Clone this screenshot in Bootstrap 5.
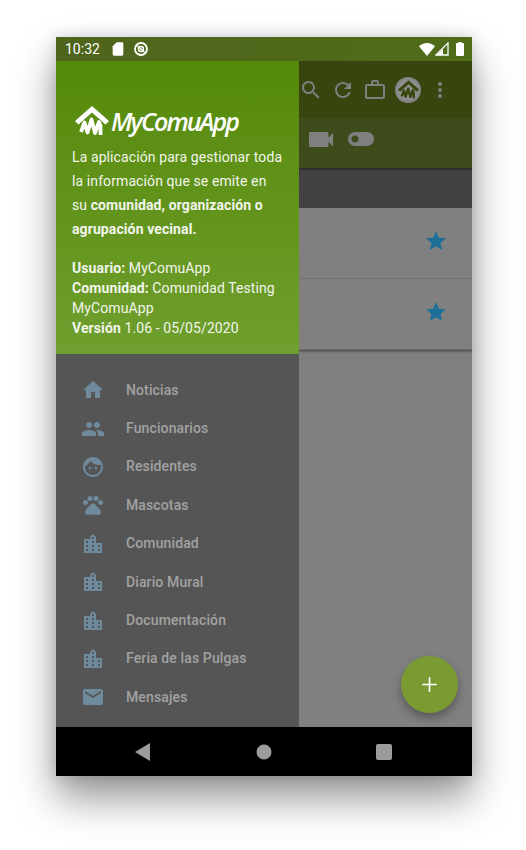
<!DOCTYPE html>
<html lang="es">
<head>
  <meta charset="UTF-8">
  <title>MyComuApp</title>
  <link rel="stylesheet" href="https://cdn.jsdelivr.net/npm/bootstrap@5.3.0/dist/css/bootstrap.min.css">
  <style>
    html, body { height: 850px; overflow: hidden; background: #fff; }
    body { font-family: Roboto, "Liberation Sans", sans-serif; padding: 37px 54px 0 56px; }
    .phone { width: 416px; height: 739px; box-shadow: 0 22px 38px rgba(0,0,0,.42), 0 0 14px rgba(0,0,0,.14); }
    .status-bar { height: 24px; flex: none; background: linear-gradient(90deg, #50641c, #4f6c19); color: #fff; font-size: 14px; padding: 0 8px 0 9px; }
    .status-bar svg { fill: #fff; }
    .sd-icon { margin-left: 10px; }
    .saver-icon { margin-left: 7px; }
    .battery-icon { margin-left: 7px; }
    .screen { height: 666px; min-height: 0; }
    .drawer { width: 243px; flex: none; z-index: 1; }
    .drawer-head { height: 293px; flex: none; padding: 44px 16px 0 16px; color: #f2f5ec; font-size: 14px; background: linear-gradient(180deg, #558909, #6f9f2e); }
    .logo-row { height: 32px; margin-left: 3px; margin-bottom: 8px; }
    .logo-text { font-family: "Open Sans", sans-serif; font-style: italic; font-weight: 600; font-size: 25px; letter-spacing: -1.9px; color: #fff; line-height: 32px; margin-left: 2px; }
    .intro { line-height: 24px; margin-bottom: 17px; letter-spacing: .1px; }
    .intro b, .info b { font-weight: 700; }
    .info { line-height: 20px; letter-spacing: .1px; }
    .side-menu { background: #555; padding-top: 17px; }
    .menu-row { height: 38.4px; padding-left: 25px; color: #a2a2a2; font-size: 14px; font-weight: 500; letter-spacing: .12px; }
    .menu-row svg { width: 24px; height: 24px; fill: #6f8a9c; margin-right: 21px; flex: none; }
    .app-pane { background: #808080; }
    .app-bar { height: 57px; flex: none; background: #37450f; }
    .app-bar svg { fill: #7f7f7f; }
    .profile-dot { width: 26px; height: 26px; background: radial-gradient(circle, #8f8f8f 50%, #6e6e6e 100%); }
    .profile-dot svg { fill: #37450f; color: #37450f; }
    .more-icon { margin-left: 7px; }
    .tab-strip { height: 50px; flex: none; background: #3e4c1c; padding: 0 0 8px 10px; }
    .toggle-icon { margin-left: 15px; }
    .dark-band { height: 40px; flex: none; background: #424242; border-top: 2px solid #2f2f2f; }
    .fav-row { height: 71px; flex: none; border-bottom: 1px solid #717171; padding: 0 24px 4px 0; }
    .fav-row svg { width: 24px; height: 24px; fill: #1e6f97; }
    .fav-end { height: 1px; flex: none; background: #555; box-shadow: 0 1px 2px rgba(0,0,0,.4); }
    .fab-add { position: absolute; right: 14px; bottom: 14px; width: 57px; height: 57px; background: #7a9a32; box-shadow: 0 5px 10px rgba(0,0,0,.32); }
    .fab-add svg { width: 25px; height: 25px; fill: #fff; }
    .nav-bar { height: 49px; flex: none; background: #000; padding: 0 80px 0 78px; }
    .nav-bar svg { fill: #9c9c9c; }
    .home-key { margin-left: 2px; }
  </style>
</head>
<body>

<!-- iconos -->
<svg width="0" height="0" class="position-absolute">
  <symbol id="i-home" viewBox="0 0 24 24"><path d="M10 20v-6h4v6h5v-8h3L12 3 2 12h3v8z"/></symbol>
  <symbol id="i-people" viewBox="0 0 24 24"><path d="M16 11c1.66 0 2.99-1.34 2.99-3S17.66 5 16 5c-1.66 0-3 1.34-3 3s1.34 3 3 3zm-8 0c1.66 0 2.99-1.34 2.99-3S9.66 5 8 5C6.34 5 5 6.34 5 8s1.34 3 3 3zm0 2c-2.33 0-7 1.17-7 3.5V19h14v-2.5c0-2.33-4.67-3.5-7-3.5zm8 0c-.29 0-.62.02-.97.05 1.16.84 1.97 1.97 1.97 3.45V19h6v-2.5c0-2.33-4.67-3.5-7-3.5z"/></symbol>
  <symbol id="i-face" viewBox="0 0 24 24"><path d="M9 11.75c-.69 0-1.25.56-1.25 1.25s.56 1.25 1.25 1.25 1.25-.56 1.25-1.25-.56-1.25-1.25-1.25zm6 0c-.69 0-1.25.56-1.25 1.25s.56 1.25 1.25 1.25 1.25-.56 1.25-1.25-.56-1.25-1.25-1.25zM12 2C6.48 2 2 6.48 2 12s4.48 10 10 10 10-4.48 10-10S17.52 2 12 2zm0 18c-4.41 0-8-3.59-8-8 0-.29.02-.58.05-.86 2.36-1.05 4.23-2.98 5.21-5.37C11.07 8.33 14.05 10 17.42 10c.78 0 1.53-.09 2.25-.26.21.71.33 1.47.33 2.26 0 4.41-3.59 8-8 8z"/></symbol>
  <symbol id="i-pets" viewBox="0 0 24 24"><circle cx="4.5" cy="9.5" r="2.5"/><circle cx="9" cy="5.5" r="2.5"/><circle cx="15" cy="5.5" r="2.5"/><circle cx="19.5" cy="9.5" r="2.5"/><path d="M17.34 14.86c-.87-1.02-1.6-1.89-2.48-2.91-.46-.54-1.05-1.08-1.75-1.32-.11-.04-.22-.07-.33-.09-.25-.04-.52-.04-.78-.04s-.53 0-.79.05c-.11.02-.22.05-.33.09-.7.24-1.28.78-1.75 1.32-.87 1.02-1.6 1.89-2.48 2.91-1.31 1.31-2.92 2.76-2.62 4.79.29 1.02 1.02 2.03 2.33 2.32.73.15 3.06-.44 5.54-.44h.18c2.48 0 4.81.58 5.54.44 1.31-.29 2.04-1.31 2.33-2.32.31-2.04-1.3-3.49-2.61-4.8z"/></symbol>
  <symbol id="i-city" viewBox="0 0 24 24"><path d="M15 11V5l-3-3-3 3v2H3v14h18V11h-6zm-8 8H5v-2h2v2zm0-4H5v-2h2v2zm0-4H5V9h2v2zm6 8h-2v-2h2v2zm0-4h-2v-2h2v2zm0-4h-2V9h2v2zm0-4h-2V5h2v2zm6 12h-2v-2h2v2zm0-4h-2v-2h2v2z"/></symbol>
  <symbol id="i-mail" viewBox="0 0 24 24"><path d="M20 4H4c-1.1 0-1.99.9-1.99 2L2 18c0 1.1.9 2 2 2h16c1.1 0 2-.9 2-2V6c0-1.1-.9-2-2-2zm0 4l-8 5-8-5V6l8 5 8-5v2z"/></symbol>
  <symbol id="i-star" viewBox="0 0 24 24"><path d="M12 17.27L18.18 21l-1.64-7.03L22 9.24l-7.19-.61L12 2 9.19 8.63 2 9.24l5.46 4.73L5.82 21z"/></symbol>
  <!-- techo + M del logo -->
  <symbol id="i-mark" viewBox="0 0 34 30">
    <path d="M17 0L34 15l-3.500 3.500L17 6.500 3.500 18.500 0 15z"/>
    <path d="M6 26l3.500-9.500 3 10 4-13 3.500 13.500 4-11 1.500 3.500V29" fill="none" stroke="currentColor" stroke-width="3.800" stroke-linejoin="round"/>
  </symbol>
</svg>

<div class="phone d-flex flex-column">

  <div class="status-bar d-flex align-items-center">
    <span>10:32</span>
    <svg class="sd-icon" width="16" height="16" viewBox="0 0 24 24"><path d="M18 2h-8L4 8v12c0 1.1.9 2 2 2h12c1.1 0 2-.9 2-2V4c0-1.1-.9-2-2-2z"/></svg>
    <svg class="saver-icon" width="16" height="16" viewBox="0 0 16 16"><circle cx="8" cy="8" r="6" fill="none" stroke="#fff" stroke-width="1.800"/><circle cx="8" cy="8" r="2.500" fill="none" stroke="#fff" stroke-width="1.500"/><path d="M4.500 5l7 6" stroke="#fff" stroke-width="1.400"/></svg>
    <svg class="ms-auto" width="16" height="13" viewBox="0 0 16 13"><path d="M8 13L0 3.200C2 1.400 4.800 0 8 0s6 1.400 8 3.200z"/></svg>
    <svg width="14" height="14" viewBox="0 0 14 14"><path d="M13 1v12H1z" fill="none" stroke="#fff" stroke-width="1.300"/><path d="M8 7v6H2z"/></svg>
    <svg class="battery-icon" width="8" height="14" viewBox="0 0 8 14"><path d="M2.500 0h3v1H7a1 1 0 0 1 1 1v11a1 1 0 0 1-1 1H1a1 1 0 0 1-1-1V2a1 1 0 0 1 1-1h1.500z"/></svg>
  </div>

  <div class="screen d-flex position-relative">

    <!-- menu lateral -->
    <div class="drawer d-flex flex-column">
      <div class="drawer-head">
        <div class="logo-row d-flex align-items-center">
          <svg width="34" height="30" fill="#fff" color="#fff"><use href="#i-mark"/></svg>
          <span class="logo-text">MyComuApp</span>
        </div>
        <p class="intro">La aplicación para gestionar toda<br>la información que se emite en<br>su <b>comunidad, organización o</b><br><b>agrupación vecinal.</b></p>
        <div class="info">
          <b>Usuario:</b> MyComuApp<br>
          <b>Comunidad:</b> Comunidad Testing<br>
          MyComuApp<br>
          <b>Versión</b> 1.06 - 05/05/2020
        </div>
      </div>
      <div class="side-menu flex-grow-1">
        <div class="menu-row d-flex align-items-center"><svg><use href="#i-home"/></svg>Noticias</div>
        <div class="menu-row d-flex align-items-center"><svg><use href="#i-people"/></svg>Funcionarios</div>
        <div class="menu-row d-flex align-items-center"><svg><use href="#i-face"/></svg>Residentes</div>
        <div class="menu-row d-flex align-items-center"><svg><use href="#i-pets"/></svg>Mascotas</div>
        <div class="menu-row d-flex align-items-center"><svg><use href="#i-city"/></svg>Comunidad</div>
        <div class="menu-row d-flex align-items-center"><svg><use href="#i-city"/></svg>Diario Mural</div>
        <div class="menu-row d-flex align-items-center"><svg><use href="#i-city"/></svg>Documentación</div>
        <div class="menu-row d-flex align-items-center"><svg><use href="#i-city"/></svg>Feria de las Pulgas</div>
        <div class="menu-row d-flex align-items-center"><svg><use href="#i-mail"/></svg>Mensajes</div>
      </div>
    </div>

    <!-- pantalla de fondo -->
    <div class="app-pane flex-grow-1 d-flex flex-column">
      <div class="app-bar d-flex align-items-center">
        <svg width="24" height="24" viewBox="0 0 24 24"><path d="M15.500 14h-.79l-.28-.27C15.410 12.590 16 11.110 16 9.500 16 5.910 13.090 3 9.500 3S3 5.910 3 9.500 5.910 16 9.500 16c1.610 0 3.090-.59 4.230-1.570l.27.28v.79l5 4.990L20.490 19l-4.990-5zm-6 0C7.010 14 5 11.990 5 9.500S7.010 5 9.500 5 14 7.010 14 9.500 11.990 14 9.500 14z"/></svg>
        <svg class="ms-2" width="24" height="24" viewBox="0 0 24 24"><path d="M17.650 6.350C16.200 4.900 14.210 4 12 4c-4.420 0-7.990 3.580-7.990 8s3.570 8 7.990 8c3.730 0 6.840-2.550 7.730-6h-2.080c-.82 2.330-3.040 4-5.650 4-3.310 0-6-2.690-6-6s2.690-6 6-6c1.660 0 3.140.69 4.220 1.780L13 11h7V4l-2.350 2.350z"/></svg>
        <svg class="ms-2" width="24" height="24" viewBox="0 0 24 24"><path d="M14 6V4h-4v2h4zM4 8v11h16V8H4zm16-2c1.110 0 2 .89 2 2v11c0 1.110-.89 2-2 2H4c-1.110 0-2-.89-2-2l.01-11c0-1.110.88-2 1.990-2h4V4c0-1.110.89-2 2-2h4c1.110 0 2 .89 2 2v2h4z"/></svg>
        <div class="ms-2 rounded-circle d-flex align-items-center justify-content-center profile-dot">
          <svg width="21" height="19"><use href="#i-mark"/></svg>
        </div>
        <svg class="more-icon" width="24" height="24" viewBox="0 0 24 24"><path d="M12 8c1.100 0 2-.9 2-2s-.9-2-2-2-2 .9-2 2 .9 2 2 2zm0 2c-1.100 0-2 .9-2 2s.9 2 2 2 2-.9 2-2-.9-2-2-2zm0 6c-1.100 0-2 .9-2 2s.9 2 2 2 2-.9 2-2-.9-2-2-2z"/></svg>
      </div>
      <div class="tab-strip d-flex align-items-center">
        <svg width="24" height="15" fill="#7f7f7f" viewBox="0 6 21 12" preserveAspectRatio="none"><path d="M17 10.500V7c0-.55-.45-1-1-1H1c-.55 0-1 .45-1 1v10c0 .55.45 1 1 1h15c.55 0 1-.45 1-1v-3.500l4 4v-11l-4 4z"/></svg>
        <svg class="toggle-icon" width="26" height="14" viewBox="0 0 26 14"><path fill="#7f7f7f" fill-rule="evenodd" d="M7 0h12a7 7 0 0 1 0 14H7A7 7 0 0 1 7 0zm0 3.500a3.500 3.500 0 1 0 0 7 3.500 3.500 0 0 0 0-7z"/></svg>
      </div>
      <div class="dark-band"></div>
      <div class="fav-row d-flex align-items-center justify-content-end"><svg><use href="#i-star"/></svg></div>
      <div class="fav-row d-flex align-items-center justify-content-end"><svg><use href="#i-star"/></svg></div>
      <div class="fav-end"></div>
    </div>

    <button type="button" class="btn fab-add rounded-circle p-0 border-0 d-flex align-items-center justify-content-center">
      <svg viewBox="0 0 24 24"><path d="M19 12.800h-6.200V19h-1.600v-6.200H5v-1.600h6.200V5h1.600v6.200H19z"/></svg>
    </button>
  </div>

  <div class="nav-bar d-flex align-items-center justify-content-between">
    <svg width="16" height="18" viewBox="0 0 16 18"><path d="M16 0v18L1 9z"/></svg>
    <svg class="home-key" width="16" height="16" viewBox="0 0 16 16"><circle cx="8" cy="8" r="7.500"/></svg>
    <svg width="16" height="16" viewBox="0 0 16 16"><rect width="16" height="16" rx="2"/></svg>
  </div>
</div>

</body>
</html>
